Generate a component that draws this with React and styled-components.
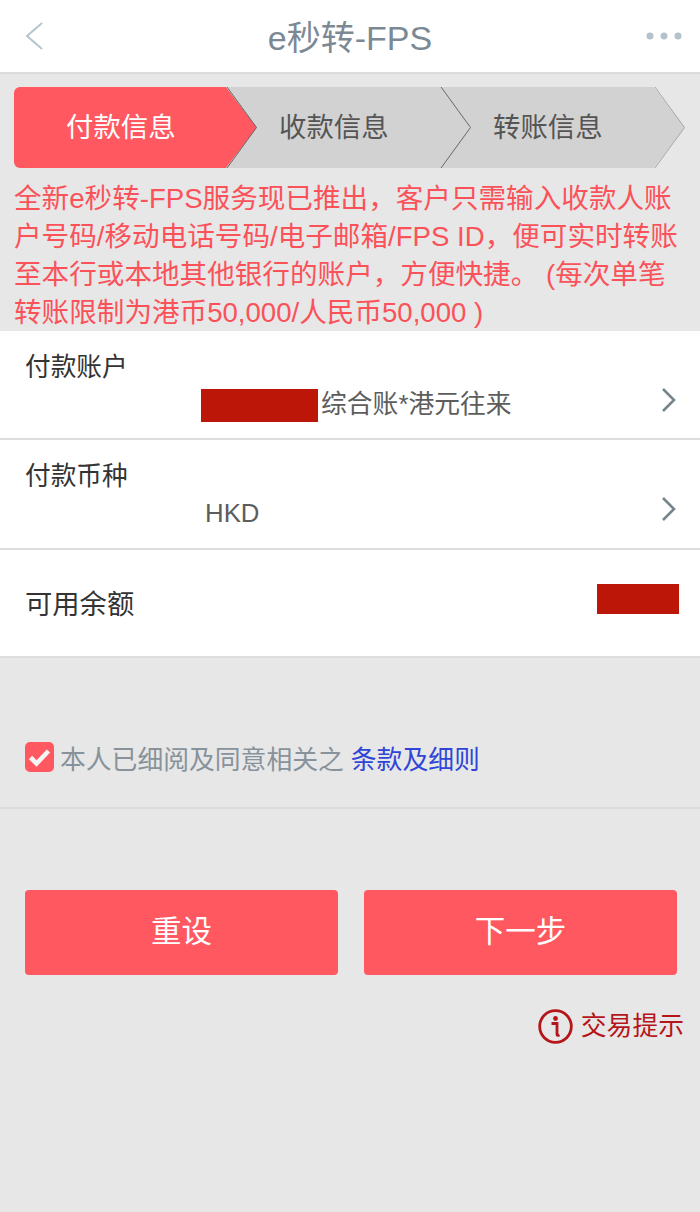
import styled, { createGlobalStyle } from "styled-components";

const GlobalStyle = createGlobalStyle`
  html, body {
    margin: 0;
    padding: 0;
    background: #e7e7e7;
  }
  body {
    font-family: "Liberation Sans", "Noto Sans CJK SC", sans-serif;
  }
`;

const Page = styled.div`
  width: 700px;
  height: 1212px;
  overflow: hidden;
  background: #e7e7e7;
`;

const Header = styled.header`
  height: 72px;
  background: #fff;
  border-bottom: 2px solid #dcdcdc;
  display: flex;
  align-items: center;
  justify-content: space-between;
  padding: 0 18px;
`;

const HeaderSide = styled.div`
  width: 56px;
  display: flex;
  justify-content: ${(p) => (p.$right ? "flex-end" : "flex-start")};
`;

const Title = styled.h1`
  margin: 0 0 2px;
  font-size: 34px;
  font-weight: 400;
  color: #7b8994;
`;

const Stepper = styled.div`
  display: flex;
  margin: 13px 0 0 14px;
  height: 81px;
`;

const Step = styled.div`
  position: relative;
  flex: none;
  width: ${(p) => (p.$first ? "243px" : "245px")};
  margin-left: ${(p) => (p.$first ? "0" : "-31px")};
  box-sizing: border-box;
  padding: 0 0 6px ${(p) => (p.$first ? "52px" : "53px")};
  display: flex;
  align-items: center;
  font-size: 27.4px;
  color: ${(p) => (p.$active ? "#fff" : "#555")};
`;

const StepFill = styled.div`
  position: absolute;
  inset: 0;
  background: ${(p) => (p.$active ? "#ff5860" : "#d2d2d2")};
  border-radius: ${(p) => (p.$first ? "6px 0 0 6px" : "0")};
  clip-path: ${(p) =>
    p.$first
      ? "polygon(0 0, 212px 0, 100% 50%, 212px 100%, 0 100%)"
      : "polygon(0 0, 214px 0, 100% 50%, 214px 100%, 0 100%, 31px 50%)"};
`;

const StepLabel = styled.span`
  position: relative;
`;

const StepEdge = styled.svg`
  position: absolute;
  z-index: 1;
  top: 0;
  right: 0;
  width: 33px;
  height: 81px;
`;

const Notice = styled.p`
  margin: 0;
  height: 163px;
  box-sizing: border-box;
  padding: 12px 14px 0;
  font-size: 27.6px;
  line-height: 38px;
  color: #fb5259;
  word-break: break-all;
`;

const Row = styled.div`
  background: #fff;
  height: ${(p) => p.$height}px;
  box-sizing: border-box;
  border-bottom: 2px solid #dddddd;
  position: relative;
  padding: ${(p) => p.$pad}px 20px 0 25px;
`;

const RowLabel = styled.div`
  font-size: ${(p) => (p.$large ? "27.3px" : "25.7px")};
  line-height: 36px;
  margin-top: ${(p) => (p.$large ? "3px" : "0")};
  color: #333;
`;

const RowValue = styled.div`
  display: flex;
  align-items: center;
  height: 34px;
  margin-top: ${(p) => p.$gap}px;
  margin-left: ${(p) => p.$indent}px;
  font-size: 25.8px;
  color: #5d5d5d;
`;

const ValueText = styled.span`
  margin: 0 0 7px 3px;
`;

const Redacted = styled.span`
  display: block;
  flex: none;
  width: ${(p) => p.$w}px;
  height: ${(p) => p.$h}px;
  margin-bottom: ${(p) => p.$lift || 0}px;
  background: #bc1608;
`;

const RowArrow = styled.svg`
  position: absolute;
  right: 23px;
  top: 56px;
  width: 16px;
  height: 26px;
`;

const BalanceRow = styled(Row)`
  display: flex;
  align-items: center;
  justify-content: space-between;
  padding: 0 21px 0 25px;
`;

const AgreeRow = styled.div`
  height: 151px;
  box-sizing: border-box;
  border-bottom: 2px solid #dcdcdc;
  padding: 84px 0 0 25px;
  display: flex;
  align-items: flex-start;
  font-size: 25.8px;
  line-height: 36px;
  color: #87929a;
`;

const CheckBox = styled.span`
  flex: none;
  width: 29px;
  height: 30px;
  margin-right: 6px;
  border-radius: 5px;
  background: #ff5860;
  display: flex;
  align-items: center;
  justify-content: center;
`;

const TermsLink = styled.a`
  color: #2f45d8;
  margin-left: 7px;
`;

const ButtonRow = styled.div`
  display: flex;
  gap: 26px;
  margin: 81px 23px 0 25px;
`;

const ActionButton = styled.button`
  flex: 1;
  height: 85px;
  border: 0;
  border-radius: 4px;
  padding: 0 0 8px;
  background: #ff5860;
  color: #fff;
  font-family: inherit;
  font-size: 30.5px;
`;

const Hint = styled.div`
  display: flex;
  justify-content: flex-end;
  align-items: center;
  gap: 8px;
  margin: 33px 16px 0 0;
  font-size: 25.8px;
  line-height: 36px;
  color: #b5161a;
`;

const steps = ["付款信息", "收款信息", "转账信息"];

export default function App() {
  return (
    <Page>
      <GlobalStyle />
      <Header>
        <HeaderSide>
          <svg width="26" height="30" viewBox="0 0 26 30" fill="none">
            <path d="M24 2 L9 15 L24 28" stroke="#b6c5ce" strokeWidth="2" />
          </svg>
        </HeaderSide>
        <Title>e秒转-FPS</Title>
        <HeaderSide $right>
          <svg width="37" height="10" viewBox="0 0 37 10" fill="#b4c2cc">
            <circle cx="5" cy="5" r="3.5" />
            <circle cx="19" cy="5" r="3.5" />
            <circle cx="33" cy="5" r="3.5" />
          </svg>
        </HeaderSide>
      </Header>

      <Stepper>
        {steps.map((name, i) => (
          <Step key={name} $first={i === 0} $active={i === 0}>
            <StepFill $first={i === 0} $active={i === 0} />
            <StepLabel>{name}</StepLabel>
            <StepEdge viewBox="0 0 33 81" fill="none">
              <path
                d="M3 0 L32.5 40.5 L3 81"
                stroke={i === 2 ? "#a8a8a8" : "#666"}
                strokeWidth="1"
              />
            </StepEdge>
          </Step>
        ))}
      </Stepper>

      <Notice>
        全新e秒转-FPS服务现已推出，客户只需输入收款人账户号码/移动电话号码/电子邮箱/FPS
        ID，便可实时转账至本行或本地其他银行的账户，方便快捷。 (每次单笔转账限制为港币50,000/人民币50,000 )
      </Notice>

      <Row $height={109} $pad={18}>
        <RowLabel>付款账户</RowLabel>
        <RowValue $gap={3} $indent={176}>
          <Redacted $w={117} $h={33} />
          <ValueText>综合账*港元往来</ValueText>
        </RowValue>
        <RowArrow viewBox="0 0 16 26" fill="none">
          <path d="M2 2 L13 13 L2 24" stroke="#76858c" strokeWidth="2.6" />
        </RowArrow>
      </Row>

      <Row $height={110} $pad={18}>
        <RowLabel>付款币种</RowLabel>
        <RowValue $gap={2} $indent={180}>HKD</RowValue>
        <RowArrow viewBox="0 0 16 26" fill="none">
          <path d="M2 2 L13 13 L2 24" stroke="#76858c" strokeWidth="2.6" />
        </RowArrow>
      </Row>

      <BalanceRow $height={108}>
        <RowLabel $large>可用余额</RowLabel>
        <Redacted $w={82} $h={30} $lift={8} />
      </BalanceRow>

      <AgreeRow>
        <CheckBox>
          <svg width="23" height="19" viewBox="0 0 23 19" fill="none">
            <path d="M2.5 9.5 L8.5 15.5 L20.5 3" stroke="#f4f4f4" strokeWidth="4.6" />
          </svg>
        </CheckBox>
        本人已细阅及同意相关之
        <TermsLink>条款及细则</TermsLink>
      </AgreeRow>

      <ButtonRow>
        <ActionButton>重设</ActionButton>
        <ActionButton>下一步</ActionButton>
      </ButtonRow>

      <Hint>
        <svg width="35" height="35" viewBox="0 0 35 35" fill="none">
          <circle cx="17.5" cy="17.5" r="15.8" stroke="#b5161a" strokeWidth="2.8" />
          <circle cx="17.5" cy="9.5" r="2.4" fill="#b5161a" />
          <path d="M13.5 14.5 H19 V25.5 Q19 27 21.5 26" stroke="#b5161a" strokeWidth="2.8" />
        </svg>
        交易提示
      </Hint>
    </Page>
  );
}
